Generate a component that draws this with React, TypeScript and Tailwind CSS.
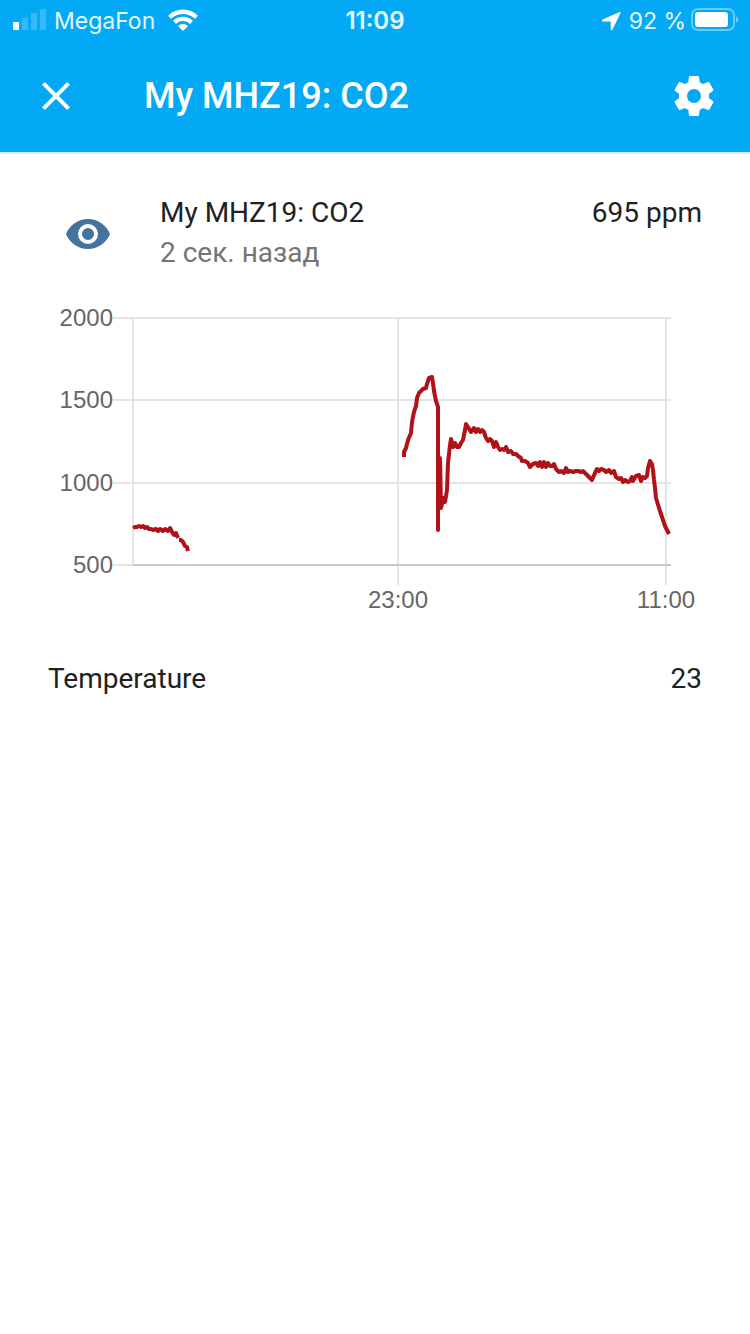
const X_TICKS = [
  { x: 398, label: "23:00" },
  { x: 666, label: "11:00" },
];

const Y_TICKS = [
  { y: 18, label: "2000" },
  { y: 100, label: "1500" },
  { y: 183, label: "1000" },
  { y: 265, label: "500" },
];

const SERIES = [
  "133,228 135,227 137,227 139,226 141,227 143,226 145,228 147,227 149,229 151,229 153,230 156,229 158,231 160,229 163,231 165,229 168,231 170,228 172,232 174,235 176,233 178,238",
  "179,240 181,240 183,242 185,246 187,247 188,251",
  "404,157 404,152 406,148 408,140 411,133 412,122 414,112 416,106 417,98 419,93 421,91 423,89 426,88 427,84 429,78 432,77 433,83 434,91 436,101 438,107 438,230 438,158 440,158 441,208 442,204 443,198 445,202 447,190 448,163 450,145 451,139 453,147 455,143 457,147 459,147 461,143 463,140 465,130 466,124 468,127 471,132 474,128 476,132 478,129 480,132 482,130 484,132 486,138 488,141 490,139 492,141 494,147 496,142 498,147 500,150 502,149 504,150 506,147 508,152 511,151 513,154 516,154 518,156 521,158 522,161 525,161 528,163 530,167 533,164 536,163 538,166 540,162 542,167 544,162 546,167 548,163 550,166 552,166 554,164 556,169 559,172 561,171 564,173 566,168 568,172 570,171 573,172 576,171 578,171 581,172 583,171 586,174 589,177 592,180 595,173 597,169 599,171 601,169 604,170 606,172 609,170 611,173 614,171 616,177 619,179 621,178 623,182 625,180 628,182 630,181 632,177 633,181 636,176 639,175 641,181 643,177 645,178 647,176 648,168 650,161 652,164 653,170 654,180 655,188 656,198 659,208 662,217 665,226 668,232 669,234",
];

function StatusBar() {
  return (
    <div className="grid h-10 grid-cols-3 items-center px-3 pt-0.5 text-[23px] leading-8 text-white/90">
      <div className="flex items-center gap-2">
        <svg className="h-6 w-[34px] shrink-0" viewBox="0 0 34 24" fill="currentColor" aria-hidden="true">
          <rect x="1" y="13" width="6" height="8" rx="1" fill="#fff" />
          <g opacity=".22">
            <rect x="10" y="9" width="6" height="12" rx="1" />
            <rect x="19" y="4" width="6" height="17" rx="1" />
            <rect x="28" y="0" width="6" height="21" rx="1" />
          </g>
        </svg>
        <span>MegaFon</span>
        <svg className="ml-1 h-6 w-8 shrink-0" viewBox="0 0 32 24" fill="#fff" aria-hidden="true">
          <path d="M16 .5c5.600 0 10.800 2.100 14.400 5.700.4.400.4.800 0 1.200l-1.900 1.900c-.4.400-.8.400-1.200 0C24.500 6.500 20.400 4.900 16 4.900S7.500 6.500 4.700 9.300c-.4.400-.8.400-1.200 0L1.600 7.400c-.4-.4-.4-.8 0-1.200C5.200 2.600 10.400.5 16 .5z" />
          <path d="M16 7.700c3.600 0 6.900 1.300 9.400 3.600.4.400.4.800 0 1.200l-1.900 1.900c-.4.400-.8.400-1.200 0-1.700-1.500-3.900-2.300-6.300-2.300s-4.600.8-6.300 2.300c-.4.400-.8.400-1.200 0l-1.900-1.900c-.4-.4-.4-.8 0-1.200 2.500-2.300 5.800-3.600 9.400-3.600z" />
          <path d="M16 14.900c1.700 0 3.200.6 4.400 1.600.4.400.4.800 0 1.200l-3.800 3.800c-.4.400-.8.400-1.200 0l-3.800-3.800c-.4-.4-.4-.8 0-1.200 1.200-1 2.700-1.600 4.400-1.600z" />
        </svg>
      </div>
      <span className="text-center text-[24px] font-semibold">11:09</span>
      <div className="flex items-center justify-end gap-1">
        <svg className="mr-1 h-5 w-5 shrink-0" viewBox="0 0 20 20" fill="#fff" aria-hidden="true">
          <path d="M18.600 1.100 1.600 8.600c-1.200.6-.9 1.900.4 1.900h7.300c.3 0 .4.100.4.400v7.200c0 1.300 1.400 1.600 1.900.4l7.900-16.500c.4-.8-.2-1.200-.9-.9z" />
        </svg>
        <span>92 %</span>
        <svg className="h-6 w-12 shrink-0 overflow-visible" viewBox="0 0 48 24" fill="none" aria-hidden="true">
          <rect x="2" y="0" width="42" height="21" rx="6" stroke="#fff" strokeOpacity=".4" strokeWidth="2" />
          <rect x="5" y="3" width="33" height="15" rx="3" fill="#fff" />
          <path d="M46 7.500c3 1 3 5 0 6z" fill="#fff" fillOpacity=".45" />
        </svg>
      </div>
    </div>
  );
}

function Toolbar() {
  return (
    <div className="flex h-28 items-center px-8">
      <button type="button" aria-label="Close" className="flex size-12 items-center justify-center">
        <svg className="size-12" viewBox="0 0 24 24" fill="#fff" aria-hidden="true">
          <path d="M19 6.410 17.590 5 12 10.590 6.410 5 5 6.410 10.590 12 5 17.590 6.410 19 12 13.410 17.590 19 19 17.590 13.410 12z" />
        </svg>
      </button>
      <h1 className="ml-16 flex-1 truncate text-[36px] leading-12 font-medium text-white">My MHZ19: CO2</h1>
      <button type="button" aria-label="Settings" className="flex size-12 items-center justify-center">
        <svg className="size-12" viewBox="0 0 24 24" fill="#fff" aria-hidden="true">
          <path d="M12 15.500A3.500 3.500 0 0 1 8.500 12 3.500 3.500 0 0 1 12 8.500a3.500 3.500 0 0 1 3.500 3.500 3.500 3.500 0 0 1-3.500 3.500m7.430-2.530c.04-.32.07-.64.07-.97s-.03-.66-.07-1l2.110-1.630c.19-.15.24-.42.12-.64l-2-3.460c-.12-.22-.39-.31-.61-.22l-2.490 1c-.52-.39-1.060-.73-1.690-.98l-.37-2.650A.506.506 0 0 0 14 2h-4c-.25 0-.46.18-.5.420l-.37 2.650c-.63.25-1.170.59-1.690.98l-2.490-1c-.22-.09-.49 0-.61.220l-2 3.460c-.13.220-.07.490.12.640L4.570 11c-.04.340-.07.670-.07 1s.03.650.07.970l-2.110 1.660c-.19.150-.25.420-.12.640l2 3.460c.12.220.39.300.61.220l2.490-1.010c.52.400 1.060.740 1.690.990l.37 2.650c.04.240.25.420.5.420h4c.25 0 .46-.18.5-.42l.37-2.650c.63-.26 1.170-.59 1.690-.99l2.490 1.010c.22.080.49 0 .61-.22l2-3.460c.12-.22.07-.49-.12-.64z" />
        </svg>
      </button>
    </div>
  );
}

function HistoryChart() {
  return (
    <svg className="block w-full" viewBox="0 0 750 324" role="img" aria-label="CO2 history">
      <g stroke="#e4e4e4" strokeWidth="2">
        {Y_TICKS.map((t) => (
          <line key={t.label} x1="113" x2="671" y1={t.y} y2={t.y} />
        ))}
        <line x1="133" x2="133" y1="18" y2="265" />
        {X_TICKS.map((t) => (
          <line key={t.label} x1={t.x} x2={t.x} y1="18" y2="285" />
        ))}
        <line x1="133" x2="671" y1="265" y2="265" stroke="#c8c8c8" />
      </g>
      <g fill="#666" fontFamily="'Liberation Sans', Arial, sans-serif" fontSize="24">
        {Y_TICKS.map((t) => (
          <text key={t.label} x="113" y={t.y + 8} textAnchor="end">
            {t.label}
          </text>
        ))}
        {X_TICKS.map((t) => (
          <text key={t.label} x={t.x} y="308" textAnchor="middle">
            {t.label}
          </text>
        ))}
      </g>
      <g fill="none" stroke="#b01217" strokeWidth="4" strokeLinejoin="round">
        {SERIES.map((points) => (
          <polyline key={points} points={points} />
        ))}
      </g>
    </svg>
  );
}

export default function App() {
  return (
    <div className="min-h-screen bg-white font-['Roboto','Noto_Sans',sans-serif] text-[#212121]">
      <header className="border-b-2 border-[#d5effd] bg-[#03a9f4]">
        <div className="font-['Inter',sans-serif]">
          <StatusBar />
        </div>
        <Toolbar />
      </header>
      <main>
        <section className="flex items-start px-12 pt-[39px] text-[28px] leading-10">
          <svg className="mx-4 mt-[17px] size-12 shrink-0" viewBox="0 0 24 24" fill="#44739e" aria-hidden="true">
            <path d="M12 9a3 3 0 0 0-3 3 3 3 0 0 0 3 3 3 3 0 0 0 3-3 3 3 0 0 0-3-3m0 8a5 5 0 0 1-5-5 5 5 0 0 1 5-5 5 5 0 0 1 5 5 5 5 0 0 1-5 5m0-12.500C7 4.500 2.730 7.610 1 12c1.730 4.390 6 7.500 11 7.500s9.270-3.110 11-7.500c-1.730-4.390-6-7.500-11-7.500z" />
          </svg>
          <div className="ml-8 flex-1">
            <h2>My MHZ19: CO2</h2>
            <p className="text-[#757575]">2 сек. назад</p>
          </div>
          <span>695 ppm</span>
        </section>
        <div className="pt-[27px]">
          <HistoryChart />
        </div>
        <dl className="flex justify-between px-12 pt-[35px] text-[28px] leading-10">
          <dt>Temperature</dt>
          <dd>23</dd>
        </dl>
      </main>
    </div>
  );
}
